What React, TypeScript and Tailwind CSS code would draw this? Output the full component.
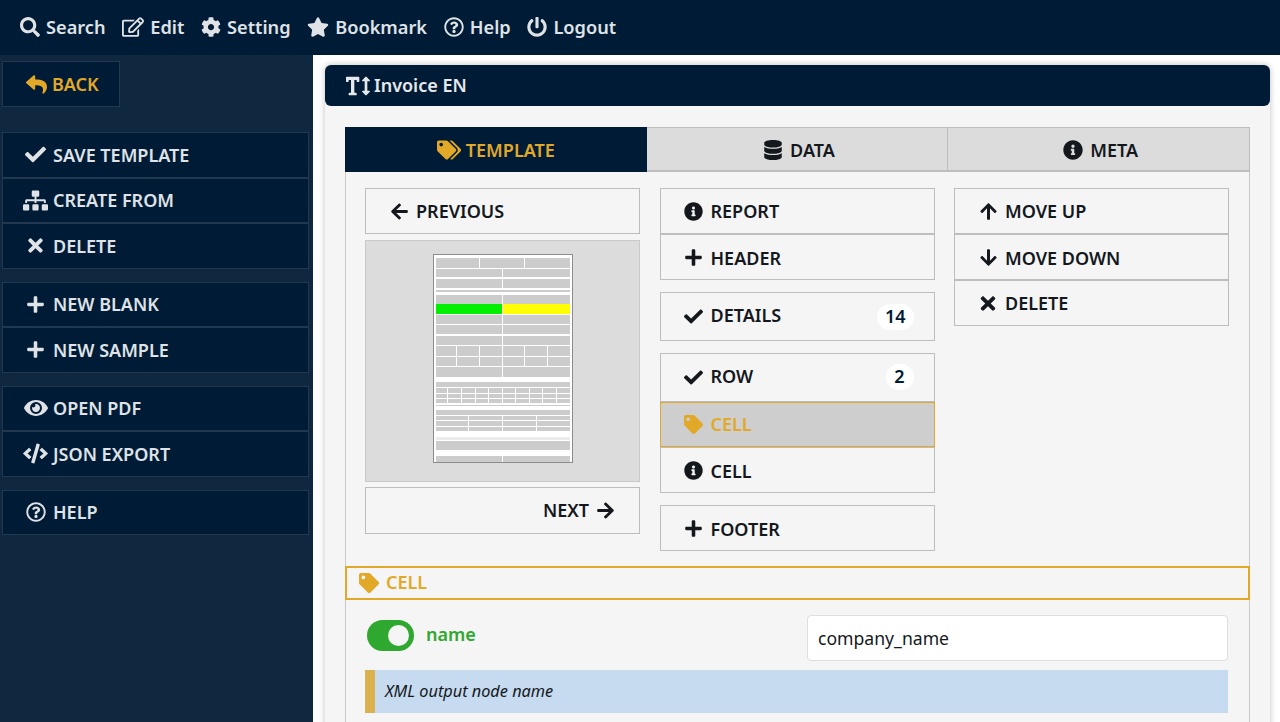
// App.tsx - invoice template editor

import React from 'react';
import {
  FaSearch, FaRegEdit, FaCog, FaStar, FaRegQuestionCircle, FaPowerOff, FaReply, FaCheck, FaSitemap,
  FaTimes, FaPlus, FaEye, FaCode, FaTextHeight, FaTags, FaTag, FaDatabase, FaInfoCircle,
  FaArrowLeft, FaArrowRight, FaArrowUp, FaArrowDown,
} from 'react-icons/fa';

const font = "font-['Noto_Sans','Open_Sans',sans-serif]";

const topItems = [
  { icon: FaSearch, label: 'Search', size: 20 },
  { icon: FaRegEdit, label: 'Edit', size: 22 },
  { icon: FaCog, label: 'Setting', size: 20 },
  { icon: FaStar, label: 'Bookmark', size: 22 },
  { icon: FaRegQuestionCircle, label: 'Help', size: 20 },
  { icon: FaPowerOff, label: 'Logout', size: 20 },
];

const sideGroups = [
  [
    { icon: FaCheck, label: 'SAVE TEMPLATE', size: 21, low: true },
    { icon: FaSitemap, label: 'CREATE FROM', size: 25 },
    { icon: FaTimes, label: 'DELETE', size: 21, low: true },
  ],
  [
    { icon: FaPlus, label: 'NEW BLANK', size: 19 },
    { icon: FaPlus, label: 'NEW SAMPLE', size: 19, low: true },
  ],
  [
    { icon: FaEye, label: 'OPEN PDF', size: 24 },
    { icon: FaCode, label: 'JSON EXPORT', size: 25, low: true },
  ],
  [{ icon: FaRegQuestionCircle, label: 'HELP', size: 20 }],
];

// thumbnail rows: y, height, column splits
const c2 = [68];
const c3 = [45, 90];
const c6 = [22, 45, 68, 90, 113];
const c10 = [13, 27, 41, 54, 68, 81, 95, 108, 122];
const c4 = [34, 68, 102];
const thumbRows: { y: number; h: number; cols: number[]; fill?: string[] }[] = [
  { y: 4, h: 10, cols: c3 },
  { y: 15, h: 8, cols: c2 },
  { y: 25, h: 9, cols: c2 },
  { y: 36, h: 2, cols: [] },
  { y: 41, h: 9, cols: c2 },
  { y: 50, h: 10, cols: c2, fill: ['#00f000', '#ffff00'] },
  { y: 61, h: 9, cols: c2 },
  { y: 71, h: 9, cols: c2 },
  { y: 82, h: 9, cols: c2 },
  { y: 92, h: 10, cols: c6 },
  { y: 103, h: 9, cols: c6 },
  { y: 113, h: 10, cols: c2 },
  { y: 128, h: 5, cols: [] },
  { y: 134, h: 5, cols: c10 },
  { y: 140, h: 4, cols: c10 },
  { y: 145, h: 4, cols: c10 },
  { y: 151, h: 1, cols: [] },
  { y: 156, h: 5, cols: [] },
  { y: 162, h: 4, cols: c4 },
  { y: 167, h: 5, cols: c4 },
  { y: 173, h: 4, cols: c4 },
  { y: 183, h: 3, cols: [] },
  { y: 187, h: 9, cols: [] },
  { y: 202, h: 6, cols: c2 },
];

const Thumbnail: React.FC = () => (
  <svg width="140" height="209" viewBox="0 0 140 209" className="block">
    <rect x="0.5" y="0.5" width="139" height="208" fill="#ffffff" stroke="#8c8c8c" />
    {thumbRows.map((row, i) => {
      const edges = [3, ...row.cols.map((c) => c + 2), 137];
      return edges.slice(0, -1).map((x, j) => (
        <rect
          key={`${i}-${j}`}
          x={x}
          y={row.y}
          width={edges[j + 1] - x - (j < edges.length - 2 ? 1 : 0)}
          height={row.h}
          fill={row.fill ? row.fill[j] : i === 21 ? '#ececec' : '#cccccc'}
        />
      ));
    })}
  </svg>
);

const SideButton: React.FC<{ icon: any; label: string; size: number; low?: boolean }> = ({
  icon: Icon,
  label,
  size,
  low,
}) => (
  <div className="flex h-[45.5px] items-center border border-[#21384f] bg-[#001b35] text-[#dfe3e7]">
    <span className="flex w-[49px] shrink-0 justify-center pl-[16px]">
      <Icon size={size} />
    </span>
    <span className={`pl-[1px] text-[18px] font-semibold ${low ? 'mt-[2px]' : ''}`}>{label}</span>
  </div>
);

const PanelButton: React.FC<{
  icon: any;
  label: string;
  badge?: string;
  h?: string;
  active?: boolean;
  iconSize?: number;
  labelClass?: string;
  badgeClass?: string;
}> = ({ icon: Icon, label, badge, h = 'h-[46px]', active, iconSize = 19, labelClass = '', badgeClass = '' }) => (
  <div
    className={`flex ${h} items-center pr-[20px] pl-[23px] text-[18px] font-semibold ${
      active
        ? 'border border-[#e2a928] bg-[#cecece] text-[#e2a928]'
        : 'border border-[#bdbdbd] bg-[#f5f5f5] text-[#14181d]'
    }`}
  >
    <span className="flex w-[20px] shrink-0 justify-center">
      <Icon size={iconSize} />
    </span>
    <span className={`ml-[7px] ${labelClass}`}>{label}</span>
    {badge && (
      <span
        className={`ml-auto flex h-[26px] min-w-[28px] items-center justify-center rounded-full bg-white px-[8px] text-[#001b35] ${badgeClass}`}
      >
        {badge}
      </span>
    )}
  </div>
);

const Tab: React.FC<{ icon: any; label: string; active?: boolean }> = ({ icon: Icon, label, active }) => (
  <div
    className={`flex h-[45px] w-1/3 flex-none items-center justify-center text-[18px] font-semibold ${
      active
        ? 'gap-[5px] bg-[#001b35] pt-[1px] text-[#e2a928]'
        : 'gap-[7px] border-t border-r border-b-2 border-[#bdbdbd] bg-[#dcdcdc] pt-[2px] pl-[4px] text-[#14181d]'
    }`}
  >
    <Icon size={active ? 24 : 20} />
    {label}
  </div>
);

const App: React.FC = () => {
  return (
    <div className={`flex h-[722px] w-[1280px] flex-col overflow-hidden bg-[#0f2840] ${font}`}>
      {/* top bar */}
      <header className="flex h-[55px] shrink-0 items-center gap-[16.7px] bg-[#001b35] pl-[20px] text-[#dfe3e7]">
        {topItems.map((item) => (
          <div key={item.label} className="flex items-center gap-[6px] text-[18.2px] font-semibold">
            <item.icon size={item.size} />
            {item.label}
          </div>
        ))}
      </header>

      <div className="flex min-h-0 flex-1">
        {/* sidebar */}
        <aside className="w-[313px] shrink-0 pt-[6px] pl-[2px]">
          <div className="flex h-[46px] w-[118px] items-center gap-[5px] border border-[#21384f] bg-[#001b35] pl-[23px] text-[18px] font-semibold text-[#e2a928]">
            <FaReply size={21} />
            BACK
          </div>
          <div className="mt-[25px] flex w-[307px] flex-col gap-[13px]">
            {sideGroups.map((group) => (
              <div key={group[0].label} className="flex flex-col">
                {group.map((b) => (
                  <SideButton key={b.label} icon={b.icon} label={b.label} size={b.size} low={b.low} />
                ))}
              </div>
            ))}
          </div>
        </aside>

        {/* main */}
        <main className="min-w-0 flex-1 bg-white pt-[10px] pr-[10px] pl-[12px]">
          <div className="h-[700px] rounded-t-[6px] bg-[#f5f5f5] shadow-[0_0_6px_rgba(0,0,0,0.25)]">
            <div className="flex h-[41px] items-center gap-[4px] rounded-[6px] bg-[#001b35] pl-[21px] text-[18px] font-semibold text-[#e6e9ec]">
              <FaTextHeight size={24} />
              Invoice EN
            </div>

            <div className="mx-[20px] mt-[21px]">
              <div className="flex">
                <Tab icon={FaTags} label="TEMPLATE" active />
                <Tab icon={FaDatabase} label="DATA" />
                <Tab icon={FaInfoCircle} label="META" />
              </div>

              <div className="border-x border-[#c9c9c9]">
                <div className="grid grid-cols-[275px_275px_275px] gap-[19.5px] px-[19px] pt-[16px] pb-[15px]">
                  <div className="flex flex-col">
                    <PanelButton icon={FaArrowLeft} label="PREVIOUS" />
                    <div className="mt-[6px] flex h-[242px] justify-center border border-[#c9c9c9] bg-[#dcdcdc] pt-[13px]">
                      <Thumbnail />
                    </div>
                    <div className="mt-[5px] flex h-[47px] items-center justify-end gap-[7px] border border-[#bdbdbd] bg-[#f5f5f5] pr-[24px] text-[18px] font-semibold text-[#14181d]">
                      NEXT
                      <FaArrowRight size={19} />
                    </div>
                  </div>

                  <div className="flex flex-col">
                    <PanelButton icon={FaInfoCircle} label="REPORT" />
                    <PanelButton icon={FaPlus} label="HEADER" labelClass="mt-[2px]" />
                    <div className="mt-[12px]">
                      <PanelButton icon={FaCheck} label="DETAILS" badge="14" h="h-[49px]" labelClass="mb-[2px]" />
                    </div>
                    <div className="mt-[12px]">
                      <PanelButton
                        icon={FaCheck}
                        label="ROW"
                        badge="2"
                        h="h-[49px]"
                        labelClass="mb-[2px]"
                        badgeClass="mb-[2px]"
                      />
                      <PanelButton icon={FaTag} label="CELL" h="h-[45px]" active />
                      <PanelButton icon={FaInfoCircle} label="CELL" labelClass="mt-[2px]" />
                    </div>
                    <div className="mt-[12px]">
                      <PanelButton icon={FaPlus} label="FOOTER" labelClass="mt-[2px]" />
                    </div>
                  </div>

                  <div className="flex flex-col">
                    <PanelButton icon={FaArrowUp} label="MOVE UP" />
                    <PanelButton icon={FaArrowDown} label="MOVE DOWN" labelClass="mt-[2px]" />
                    <PanelButton icon={FaTimes} label="DELETE" iconSize={21} />
                  </div>
                </div>
              </div>

              <div className="flex h-[34px] items-center gap-[7px] border-2 border-[#e2a928] pl-[12px] text-[18px] font-semibold text-[#e2a928]">
                <FaTag size={20} />
                <span className="mb-[2px]">CELL</span>
              </div>

              <div className="h-[200px] border-x border-[#c9c9c9] pt-[15px] pr-[21px] pl-[19px]">
                <div className="flex items-start">
                  <div className="mt-[5px] ml-[2px] flex h-[31px] w-[47px] items-center justify-end rounded-full bg-[#2fa82f] pr-[5px]">
                    <span className="h-[21px] w-[21px] rounded-full bg-[#f5f5f5]" />
                  </div>
                  <span className="mt-[6px] ml-[12px] text-[18px] font-semibold text-[#2fa82f]">name</span>
                  <div className="ml-auto flex h-[46px] w-[421px] items-center rounded-[4px] border border-[#dedede] bg-white pl-[10px] text-[17.6px] text-[#14181d]">
                    company_name
                  </div>
                </div>
                <div className="mt-[9px] flex h-[43px] items-center border-l-[10px] border-[#dbb14f] bg-[#c6dbef] pl-[10px] text-[16.3px] text-[#14181d] italic">
                  XML output node name
                </div>
              </div>
            </div>
          </div>
        </main>
      </div>
    </div>
  );
};

export default App;
